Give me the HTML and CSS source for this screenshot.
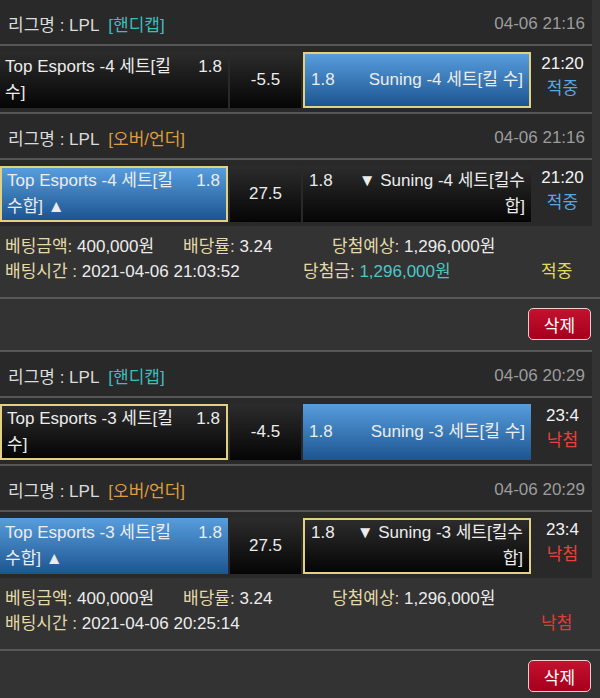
FILE: index.html
```html
<!DOCTYPE html>
<html lang="ko">
<head>
<meta charset="utf-8">
<title>배팅내역</title>
<link rel="stylesheet" href="styles.css">
</head>
<body>
<div class="bet">
  <div class="sheet">
    <div class="hd"><span class="league">리그명 : LPL<span class="type hc">[핸디캡]</span></span><span class="date">04-06 21:16</span></div>
    <div class="row">
      <div class="cell side home dark"><div class="pair"><span class="name">Top Esports -4 세트[킬 수]</span><span class="odds">1.8</span></div></div>
      <div class="cell mid dark">-5.5</div>
      <div class="cell side away blue picked"><div class="pair"><span class="odds">1.8</span><span class="name">Suning -4 세트[킬 수]</span></div></div>
      <div class="status"><span class="time">21:20</span><span class="win">적중</span></div>
    </div>
    <div class="hd"><span class="league">리그명 : LPL<span class="type ou">[오버/언더]</span></span><span class="date">04-06 21:16</span></div>
    <div class="row">
      <div class="cell side home blue picked"><div class="pair"><span class="name">Top Esports -4 세트[킬수합] ▲</span><span class="odds">1.8</span></div></div>
      <div class="cell mid dark">27.5</div>
      <div class="cell side away dark"><div class="pair"><span class="odds">1.8</span><span class="name">▼ Suning -4 세트[킬수합]</span></div></div>
      <div class="status"><span class="time">21:20</span><span class="win">적중</span></div>
    </div>
  </div>
  <div class="info">
    <div class="line">
      <span class="c1"><span class="lbl">베팅금액:</span> 400,000원</span>
      <span class="c2"><span class="lbl">배당률:</span> 3.24</span>
      <span><span class="lbl">당첨예상:</span> 1,296,000원</span>
    </div>
    <div class="line">
      <span class="c1w"><span class="lbl">배팅시간 :</span> 2021-04-06 21:03:52</span>
      <span class="c2w"><span class="lbl">당첨금:</span> <span class="amt">1,296,000원</span></span>
      <span class="ok">적중</span>
    </div>
  </div>
  <div class="actions"><button class="del" type="button">삭제</button></div>
</div>

<div class="bet">
  <div class="sheet">
    <div class="hd"><span class="league">리그명 : LPL<span class="type hc">[핸디캡]</span></span><span class="date">04-06 20:29</span></div>
    <div class="row">
      <div class="cell side home dark picked"><div class="pair"><span class="name">Top Esports -3 세트[킬 수]</span><span class="odds">1.8</span></div></div>
      <div class="cell mid dark">-4.5</div>
      <div class="cell side away blue"><div class="pair"><span class="odds">1.8</span><span class="name">Suning -3 세트[킬 수]</span></div></div>
      <div class="status"><span class="time">23:4</span><span class="lose">낙첨</span></div>
    </div>
    <div class="hd"><span class="league">리그명 : LPL<span class="type ou">[오버/언더]</span></span><span class="date">04-06 20:29</span></div>
    <div class="row">
      <div class="cell side home blue"><div class="pair"><span class="name">Top Esports -3 세트[킬수합] ▲</span><span class="odds">1.8</span></div></div>
      <div class="cell mid dark">27.5</div>
      <div class="cell side away dark picked"><div class="pair"><span class="odds">1.8</span><span class="name">▼ Suning -3 세트[킬수합]</span></div></div>
      <div class="status"><span class="time">23:4</span><span class="lose">낙첨</span></div>
    </div>
  </div>
  <div class="info">
    <div class="line">
      <span class="c1"><span class="lbl">베팅금액:</span> 400,000원</span>
      <span class="c2"><span class="lbl">배당률:</span> 3.24</span>
      <span><span class="lbl">당첨예상:</span> 1,296,000원</span>
    </div>
    <div class="line">
      <span class="c1w"><span class="lbl">배팅시간 :</span> 2021-04-06 20:25:14</span>
      <span class="c2w"></span>
      <span class="ng">낙첨</span>
    </div>
  </div>
  <div class="actions"><button class="del" type="button">삭제</button></div>
</div>
</body>
</html>
```

FILE: styles.css
```css
html, body {
  margin: 0;
  padding: 0;
}

body {
  background: #333333;
  color: #ececec;
  font-family: "Liberation Sans", "Noto Sans CJK KR", sans-serif;
  font-size: 17px;
  overflow: hidden;
}

.sheet {
  width: 592px;
  background: #292929;
  border-top: 2px solid #575757;
}

.bet:first-child .sheet {
  border-top: 0;
}

.hd {
  height: 41px;
  display: flex;
  justify-content: space-between;
  align-items: center;
  padding: 3px 7px 0 8px;
  white-space: nowrap;
}

.hd + .row,
.row + .hd {
  border-top: 2px solid #575757;
}

.league {
  color: #dcdcdc;
}

.type {
  margin-left: 9px;
}

.hc {
  color: #3fbdbd;
}

.ou {
  color: #dc9d3e;
}

.date {
  color: #9c9c9c;
}

.row {
  display: flex;
  gap: 2px;
  height: 56px;
  padding: 6px 0 4px;
}

.cell {
  height: 56px;
  box-sizing: border-box;
  display: flex;
  align-items: center;
}

.side {
  width: 228px;
  padding: 0 6px;
}

.home {
  padding-left: 5px;
}

.mid {
  width: 71px;
  justify-content: center;
}

.dark {
  background: linear-gradient(#2c2c2c, #050505);
}

.blue {
  background: linear-gradient(#589ddd, #1c5590);
}

.picked {
  border: 2px solid #e2d183;
}

.pair {
  display: flex;
  align-items: flex-start;
  width: 100%;
  line-height: 26px;
}

.home .name {
  flex: 1;
}

.home .odds {
  width: 36px;
  text-align: right;
}

.away .odds {
  width: 34px;
}

.away .name {
  flex: 1;
  text-align: right;
}

.status {
  width: 59px;
  display: flex;
  flex-direction: column;
  align-items: center;
  justify-content: center;
  line-height: 25px;
  padding-bottom: 9px;
  box-sizing: border-box;
  white-space: nowrap;
}

.time {
  color: #f2f2f2;
}

.win {
  color: #5aa8e0;
}

.lose {
  color: #e8403c;
}

.info {
  padding: 8px 0 13px 5px;
  border-bottom: 2px solid #575757;
  line-height: 25px;
}

.line {
  display: flex;
  white-space: nowrap;
  height: 25px;
}

.c1 {
  width: 178px;
}

.c2 {
  width: 149px;
}

.c1w {
  width: 298px;
}

.c2w {
  width: 238px;
}

.lbl {
  color: #e3daa8;
}

.amt {
  color: #4fc6c6;
}

.ok {
  color: #e2dc5c;
}

.ng {
  color: #e23a36;
}

.actions {
  display: flex;
  justify-content: flex-end;
  height: 42px;
  padding: 9px 9px 0 0;
}

.del {
  width: 63px;
  height: 32px;
  padding: 0;
  background: linear-gradient(#c4112e, #a6001c);
  border: 1.5px solid #efcdd1;
  border-radius: 5px;
  color: #ffffff;
  font-family: "Liberation Sans", "Noto Sans CJK KR", sans-serif;
  font-size: 17px;
}
```
